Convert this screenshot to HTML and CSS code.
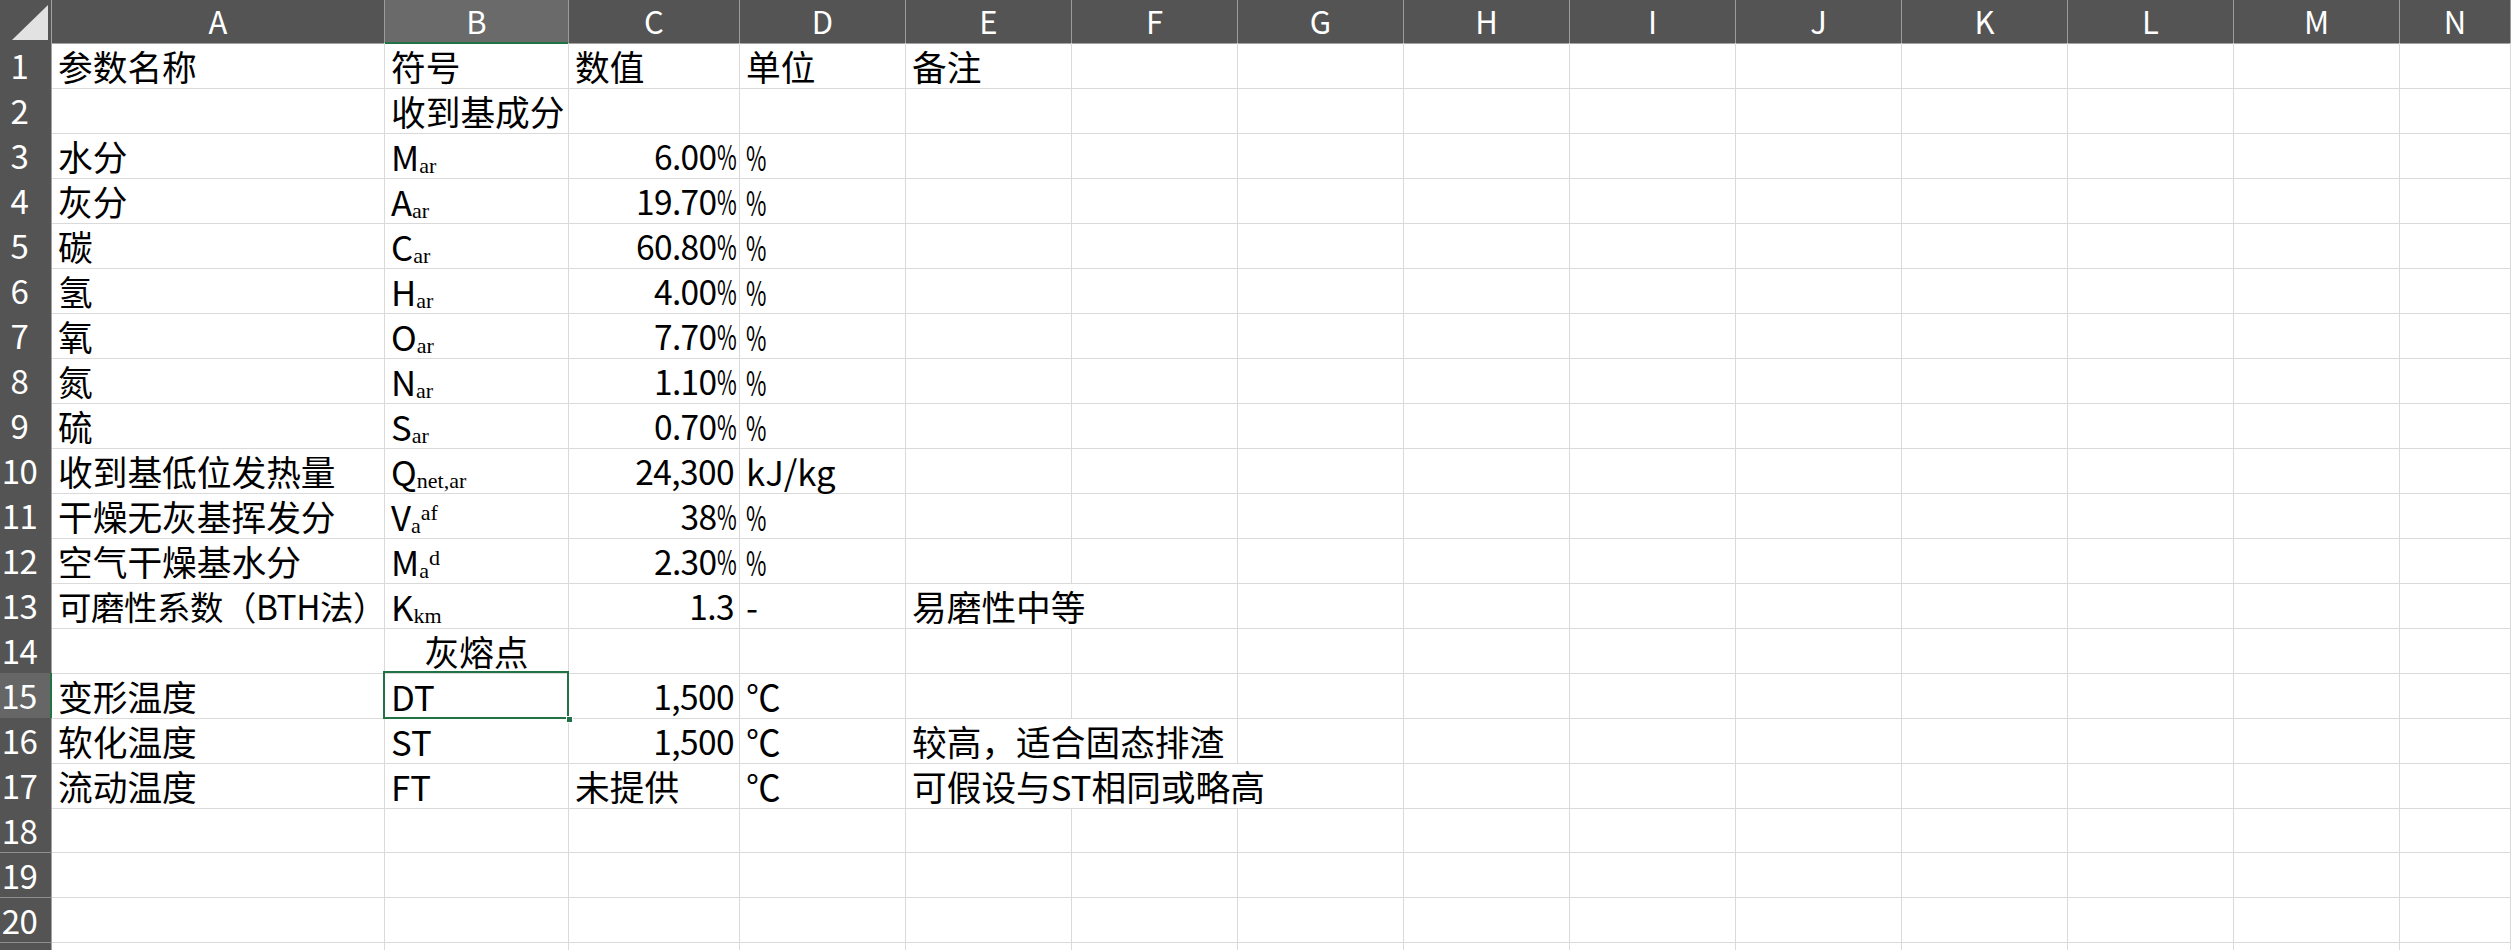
FILE: index.html
```html
<!DOCTYPE html>
<html lang="zh-CN">
<head>
<meta charset="utf-8">
<title>Sheet</title>
<link rel="stylesheet" href="styles.css">
</head>
<body>
<div class="sheet">
  <div class="row hdr">
    <div class="corner"><svg class="tri" width="36" height="35" viewBox="0 0 36 35"><polygon points="36,0 36,35 0,35" fill="#e2e2e2"/></svg></div>
    <div class="ch">A</div><div class="ch sel-col">B</div><div class="ch">C</div><div class="ch">D</div><div class="ch">E</div><div class="ch">F</div><div class="ch">G</div><div class="ch">H</div><div class="ch">I</div><div class="ch">J</div><div class="ch">K</div><div class="ch">L</div><div class="ch">M</div><div class="ch">N</div>
  </div>

  <div class="row">
    <div class="rh">1</div>
    <div class="c">参数名称</div><div class="c">符号</div><div class="c">数值</div><div class="c">单位</div><div class="c">备注</div>
    <div class="c"></div><div class="c"></div><div class="c"></div><div class="c"></div><div class="c"></div><div class="c"></div><div class="c"></div><div class="c"></div><div class="c"></div>
  </div>

  <div class="row">
    <div class="rh">2</div>
    <div class="c"></div><div class="c ctr">收到基成分</div><div class="c"></div><div class="c"></div><div class="c"></div>
    <div class="c"></div><div class="c"></div><div class="c"></div><div class="c"></div><div class="c"></div><div class="c"></div><div class="c"></div><div class="c"></div><div class="c"></div>
  </div>

  <div class="row">
    <div class="rh">3</div>
    <div class="c">水分</div><div class="c">M<span class="sub">ar</span></div><div class="c r">6.00<span class="pct">%</span></div><div class="c"><span class="pct">%</span></div><div class="c"></div>
    <div class="c"></div><div class="c"></div><div class="c"></div><div class="c"></div><div class="c"></div><div class="c"></div><div class="c"></div><div class="c"></div><div class="c"></div>
  </div>

  <div class="row">
    <div class="rh">4</div>
    <div class="c">灰分</div><div class="c">A<span class="sub">ar</span></div><div class="c r">19.70<span class="pct">%</span></div><div class="c"><span class="pct">%</span></div><div class="c"></div>
    <div class="c"></div><div class="c"></div><div class="c"></div><div class="c"></div><div class="c"></div><div class="c"></div><div class="c"></div><div class="c"></div><div class="c"></div>
  </div>

  <div class="row">
    <div class="rh">5</div>
    <div class="c">碳</div><div class="c">C<span class="sub">ar</span></div><div class="c r">60.80<span class="pct">%</span></div><div class="c"><span class="pct">%</span></div><div class="c"></div>
    <div class="c"></div><div class="c"></div><div class="c"></div><div class="c"></div><div class="c"></div><div class="c"></div><div class="c"></div><div class="c"></div><div class="c"></div>
  </div>

  <div class="row">
    <div class="rh">6</div>
    <div class="c">氢</div><div class="c">H<span class="sub">ar</span></div><div class="c r">4.00<span class="pct">%</span></div><div class="c"><span class="pct">%</span></div><div class="c"></div>
    <div class="c"></div><div class="c"></div><div class="c"></div><div class="c"></div><div class="c"></div><div class="c"></div><div class="c"></div><div class="c"></div><div class="c"></div>
  </div>

  <div class="row">
    <div class="rh">7</div>
    <div class="c">氧</div><div class="c">O<span class="sub">ar</span></div><div class="c r">7.70<span class="pct">%</span></div><div class="c"><span class="pct">%</span></div><div class="c"></div>
    <div class="c"></div><div class="c"></div><div class="c"></div><div class="c"></div><div class="c"></div><div class="c"></div><div class="c"></div><div class="c"></div><div class="c"></div>
  </div>

  <div class="row">
    <div class="rh">8</div>
    <div class="c">氮</div><div class="c">N<span class="sub">ar</span></div><div class="c r">1.10<span class="pct">%</span></div><div class="c"><span class="pct">%</span></div><div class="c"></div>
    <div class="c"></div><div class="c"></div><div class="c"></div><div class="c"></div><div class="c"></div><div class="c"></div><div class="c"></div><div class="c"></div><div class="c"></div>
  </div>

  <div class="row">
    <div class="rh">9</div>
    <div class="c">硫</div><div class="c">S<span class="sub">ar</span></div><div class="c r">0.70<span class="pct">%</span></div><div class="c"><span class="pct">%</span></div><div class="c"></div>
    <div class="c"></div><div class="c"></div><div class="c"></div><div class="c"></div><div class="c"></div><div class="c"></div><div class="c"></div><div class="c"></div><div class="c"></div>
  </div>

  <div class="row">
    <div class="rh">10</div>
    <div class="c">收到基低位发热量</div><div class="c">Q<span class="sub">net,ar</span></div><div class="c r">24,300</div><div class="c">kJ/kg</div><div class="c"></div>
    <div class="c"></div><div class="c"></div><div class="c"></div><div class="c"></div><div class="c"></div><div class="c"></div><div class="c"></div><div class="c"></div><div class="c"></div>
  </div>

  <div class="row">
    <div class="rh">11</div>
    <div class="c">干燥无灰基挥发分</div><div class="c">V<span class="sub">a</span><span class="sup">af</span></div><div class="c r">38<span class="pct">%</span></div><div class="c"><span class="pct">%</span></div><div class="c"></div>
    <div class="c"></div><div class="c"></div><div class="c"></div><div class="c"></div><div class="c"></div><div class="c"></div><div class="c"></div><div class="c"></div><div class="c"></div>
  </div>

  <div class="row">
    <div class="rh">12</div>
    <div class="c">空气干燥基水分</div><div class="c">M<span class="sub">a</span><span class="sup">d</span></div><div class="c r">2.30<span class="pct">%</span></div><div class="c"><span class="pct">%</span></div><div class="c"></div>
    <div class="c"></div><div class="c"></div><div class="c"></div><div class="c"></div><div class="c"></div><div class="c"></div><div class="c"></div><div class="c"></div><div class="c"></div>
  </div>

  <div class="row">
    <div class="rh">13</div>
    <div class="c tight">可磨性系数（BTH法）</div><div class="c">K<span class="sub">km</span></div><div class="c r">1.3</div><div class="c">-</div><div class="c span2">易磨性中等</div>
    <div class="c"></div><div class="c"></div><div class="c"></div><div class="c"></div><div class="c"></div><div class="c"></div><div class="c"></div><div class="c"></div>
  </div>

  <div class="row">
    <div class="rh">14</div>
    <div class="c"></div><div class="c ctr">灰熔点</div><div class="c"></div><div class="c"></div><div class="c"></div>
    <div class="c"></div><div class="c"></div><div class="c"></div><div class="c"></div><div class="c"></div><div class="c"></div><div class="c"></div><div class="c"></div><div class="c"></div>
  </div>

  <div class="row">
    <div class="rh sel-row">15</div>
    <div class="c">变形温度</div><div class="c active">DT</div><div class="c r">1,500</div><div class="c">℃</div><div class="c"></div>
    <div class="c"></div><div class="c"></div><div class="c"></div><div class="c"></div><div class="c"></div><div class="c"></div><div class="c"></div><div class="c"></div><div class="c"></div>
  </div>

  <div class="row">
    <div class="rh">16</div>
    <div class="c">软化温度</div><div class="c">ST</div><div class="c r">1,500</div><div class="c">℃</div><div class="c span2">较高，适合固态排渣</div>
    <div class="c"></div><div class="c"></div><div class="c"></div><div class="c"></div><div class="c"></div><div class="c"></div><div class="c"></div><div class="c"></div>
  </div>

  <div class="row">
    <div class="rh">17</div>
    <div class="c">流动温度</div><div class="c">FT</div><div class="c">未提供</div><div class="c">℃</div><div class="c span3">可假设与ST相同或略高</div>
    <div class="c"></div><div class="c"></div><div class="c"></div><div class="c"></div><div class="c"></div><div class="c"></div><div class="c"></div>
  </div>

  <div class="row">
    <div class="rh">18</div>
    <div class="c"></div><div class="c"></div><div class="c"></div><div class="c"></div><div class="c"></div>
    <div class="c"></div><div class="c"></div><div class="c"></div><div class="c"></div><div class="c"></div><div class="c"></div><div class="c"></div><div class="c"></div><div class="c"></div>
  </div>

  <div class="row">
    <div class="rh">19</div>
    <div class="c"></div><div class="c"></div><div class="c"></div><div class="c"></div><div class="c"></div>
    <div class="c"></div><div class="c"></div><div class="c"></div><div class="c"></div><div class="c"></div><div class="c"></div><div class="c"></div><div class="c"></div><div class="c"></div>
  </div>

  <div class="row">
    <div class="rh">20</div>
    <div class="c"></div><div class="c"></div><div class="c"></div><div class="c"></div><div class="c"></div>
    <div class="c"></div><div class="c"></div><div class="c"></div><div class="c"></div><div class="c"></div><div class="c"></div><div class="c"></div><div class="c"></div><div class="c"></div>
  </div>

  <div class="row">
    <div class="rh"></div>
    <div class="c"></div><div class="c"></div><div class="c"></div><div class="c"></div><div class="c"></div>
    <div class="c"></div><div class="c"></div><div class="c"></div><div class="c"></div><div class="c"></div><div class="c"></div><div class="c"></div><div class="c"></div><div class="c"></div>
  </div>
</div>
</body>
</html>
```

FILE: styles.css
```css
html, body {
  margin: 0;
  padding: 0;
  background: #ffffff;
}
body {
  width: 2511px;
  height: 950px;
  overflow: hidden;
  font-family: "Noto Sans CJK SC", "Noto Sans", sans-serif;
  color: #000000;
}
.sheet {
  display: flex;
  flex-direction: column;
}
.row {
  display: grid;
  grid-template-columns: 52px 333px 184px 171px repeat(10, 166px) 111px;
  height: 45px;
  flex: none;
}
.row.hdr {
  height: 43px;
}
.corner {
  background: #545454;
  border-right: 1px solid #a3a3a3;
  border-bottom: 1px solid #a3a3a3;
  box-sizing: border-box;
  display: flex;
  align-items: flex-end;
  justify-content: flex-end;
  padding: 0 3px 3px 0;
}
.tri {
  display: block;
}
.ch {
  background: #545454;
  color: #ffffff;
  font-size: 31px;
  line-height: 42px;
  text-align: center;
  border-right: 1px solid #9c9c9c;
  border-bottom: 1px solid #a3a3a3;
  box-sizing: border-box;
}
.ch.sel-col {
  background: #6a6a6a;
  border-bottom: 2px solid #217346;
}
.rh {
  background: #545454;
  color: #ffffff;
  font-size: 33px;
  line-height: 44px;
  text-align: center;
  padding-right: 12px;
  border-right: 1px solid #a3a3a3;
  border-bottom: 1px solid #8e8e8e;
  box-sizing: border-box;
  letter-spacing: -0.5px;
}
.rh.sel-row {
  background: #666666;
  border-right: 2px solid #217346;
}
.c {
  border-right: 1px solid #dadada;
  border-bottom: 1px solid #dadada;
  box-sizing: border-box;
  font-size: 34.7px;
  line-height: 44px;
  padding: 1px 6px 0 6px;
  white-space: nowrap;
  min-width: 0;
}
.c.tight {
  font-size: 33.4px;
  letter-spacing: -0.4px;
  padding-right: 0;
}
.c.r {
  text-align: right;
  padding-right: 5px;
  font-size: 33.5px;
  letter-spacing: -0.6px;
}
.c.ctr {
  text-align: center;
}
.c.span2 {
  grid-column: span 2;
}
.c.span3 {
  grid-column: span 3;
}
.pct {
  display: inline-block;
  width: 0.52em;
  transform: scaleX(0.64);
  transform-origin: 0 50%;
  letter-spacing: 0;
}
.sub {
  font-family: "Liberation Serif", serif;
  font-size: 22px;
  line-height: 0;
  vertical-align: -2px;
}
.sup {
  font-family: "Liberation Serif", serif;
  font-size: 22px;
  line-height: 0;
  vertical-align: 11px;
}
.c.active {
  position: relative;
}
.c.active::after {
  content: "";
  position: absolute;
  left: -2px;
  top: -2px;
  right: -1px;
  bottom: -1px;
  border: 2px solid #217346;
}
.c.active::before {
  content: "";
  position: absolute;
  right: -5px;
  bottom: -5px;
  width: 7px;
  height: 7px;
  background: #217346;
  border: 1px solid #ffffff;
  box-sizing: border-box;
  z-index: 1;
}
```
